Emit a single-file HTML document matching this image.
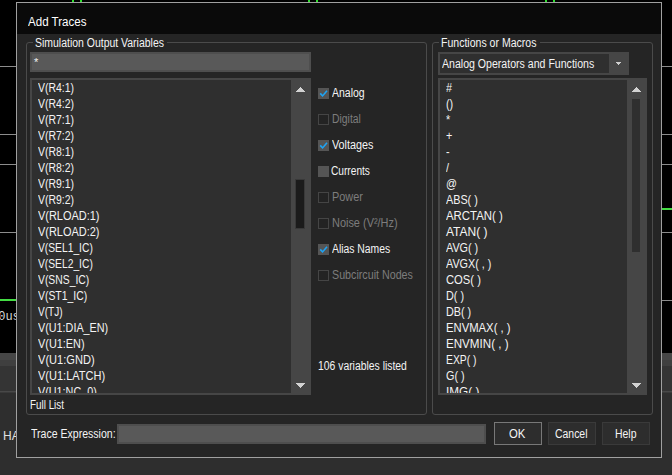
<!DOCTYPE html>
<html>
<head>
<meta charset="utf-8">
<title>Add Traces</title>
<style>
html,body{margin:0;padding:0;}
body{width:672px;height:475px;overflow:hidden;background:#000;position:relative;font-family:"Liberation Sans",sans-serif;font-size:12px;color:#f4f4f4;}
.abs{position:absolute;}
.hl{position:absolute;height:1px;background:#8c8c8c;}
.gl{position:absolute;height:2px;background:#44dd44;}
.vt{position:absolute;width:2px;height:2px;top:0;background:#2fe02f;}
#dlg{position:absolute;left:16px;top:2px;width:644px;height:454px;border:1px solid #a0a0a0;background:#252525;}
#title{position:absolute;left:0;top:0;width:644px;height:31px;background:#0a0a0a;}
.grp{position:absolute;border:1px solid #4b4b4b;border-radius:3px;}
.lbl{position:absolute;white-space:nowrap;line-height:14px;font-size:12px;transform-origin:0 50%;}
.ttl{line-height:16px;color:#fff;}
.gap{position:absolute;height:3px;background:#252525;}
.inp{position:absolute;background:#595959;border:2px solid #4e4e4e;box-sizing:border-box;}
.list{position:absolute;background:#2f2f2f;border:2px solid #464646;box-sizing:border-box;overflow:hidden;}
.list .it{position:absolute;left:6px;white-space:nowrap;line-height:16px;height:16px;font-size:12px;transform-origin:0 50%;transform:scaleX(0.90);}
.sb{position:absolute;right:0;top:0;bottom:0;width:18px;background:#464646;}
.thumb{position:absolute;left:5px;width:8px;}
.up{position:absolute;left:5px;width:0;height:0;border-left:4.5px solid transparent;border-right:4.5px solid transparent;border-bottom:5px solid #d4d4d4;}
.dn{position:absolute;left:5px;width:0;height:0;border-left:4.5px solid transparent;border-right:4.5px solid transparent;border-top:5px solid #d4d4d4;}
.cb{position:absolute;width:11px;height:11px;box-sizing:border-box;}
.cb.on{background:#555;}
.cb.off{border:1px solid #454545;background:#232323;}
.cb svg{position:absolute;left:0;top:0;}
.dis{color:#7d7d7d;}
.btn{position:absolute;box-sizing:border-box;width:48px;height:23px;background:#2d2d2d;border:1px solid #3a3a3a;}
</style>
</head>
<body>
<!-- background waveform window -->
<div class="hl" style="left:0;width:672px;top:66px;"></div>
<div class="hl" style="left:0;width:672px;top:134px;"></div>
<div class="hl" style="left:0;width:672px;top:164px;"></div>
<div class="hl" style="left:0;width:672px;top:232px;"></div>
<div class="hl" style="left:660px;width:12px;top:300px;"></div>
<div class="gl" style="left:0;width:17px;top:299px;"></div>
<div class="gl" style="left:660px;width:12px;top:208px;"></div>
<div class="vt" style="left:72px;"></div>
<div class="vt" style="left:80px;"></div>
<div class="vt" style="left:308px;"></div>
<div class="vt" style="left:316px;"></div>
<div class="vt" style="left:545px;"></div>
<div class="vt" style="left:553px;"></div>
<div class="abs" style="left:-1.8px;top:310px;font-family:'Liberation Mono',monospace;font-size:12px;color:#d6d6d6;line-height:14px;">0us</div>
<div class="abs" style="left:0;top:353px;width:672px;height:7px;background:#464646;"></div>
<div class="abs" style="left:0;top:360px;width:672px;height:6px;background:#3f3f3f;"></div>
<div class="abs" style="left:0;top:366px;width:672px;height:109px;background:#343434;"></div>
<div class="abs" style="left:0;top:391px;width:672px;height:1px;background:#484848;"></div>
<div class="abs" style="left:0;top:392px;width:672px;height:83px;background:#2e2e2e;"></div>
<div class="abs" style="left:0;top:392px;width:672px;height:1px;background:#3a3a3a;"></div>
<div class="abs" style="left:3px;top:429px;font-size:12px;line-height:14px;color:#e0e0e0;">HA</div>

<div id="dlg">
  <div id="title"></div>
  <div class="lbl ttl" style="left:11.0px;top:10.5px;font-size:12.5px;transform:scaleX(0.924);">Add Traces</div>

  <!-- left group -->
  <div class="grp" style="left:9px;top:39px;width:399px;height:371px;"></div>
  <div class="gap" style="left:16px;top:38px;width:134px;"></div>
  <div class="lbl" style="left:17.9px;top:33px;transform:scaleX(0.872);">Simulation Output Variables</div>
  <div class="inp" style="left:13px;top:49px;width:281px;height:20px;"></div>
  <div class="lbl" style="left:17px;top:51.5px;font-size:11px;">*</div>

  <div class="list" style="left:13px;top:75px;width:281px;height:317px;">
    <div class="it" style="top:0px;transform:scaleX(0.870);">V(R4:1)</div>
    <div class="it" style="top:16px;transform:scaleX(0.870);">V(R4:2)</div>
    <div class="it" style="top:32px;transform:scaleX(0.870);">V(R7:1)</div>
    <div class="it" style="top:48px;transform:scaleX(0.870);">V(R7:2)</div>
    <div class="it" style="top:64px;transform:scaleX(0.870);">V(R8:1)</div>
    <div class="it" style="top:80px;transform:scaleX(0.870);">V(R8:2)</div>
    <div class="it" style="top:96px;transform:scaleX(0.870);">V(R9:1)</div>
    <div class="it" style="top:112px;transform:scaleX(0.870);">V(R9:2)</div>
    <div class="it" style="top:128px;transform:scaleX(0.913);">V(RLOAD:1)</div>
    <div class="it" style="top:144px;transform:scaleX(0.913);">V(RLOAD:2)</div>
    <div class="it" style="top:160px;transform:scaleX(0.856);">V(SEL1_IC)</div>
    <div class="it" style="top:176px;transform:scaleX(0.856);">V(SEL2_IC)</div>
    <div class="it" style="top:192px;transform:scaleX(0.864);">V(SNS_IC)</div>
    <div class="it" style="top:208px;transform:scaleX(0.868);">V(ST1_IC)</div>
    <div class="it" style="top:224px;transform:scaleX(0.838);">V(TJ)</div>
    <div class="it" style="top:240px;">V(U1:DIA_EN)</div>
    <div class="it" style="top:256px;transform:scaleX(0.908);">V(U1:EN)</div>
    <div class="it" style="top:272px;transform:scaleX(0.923);">V(U1:GND)</div>
    <div class="it" style="top:288px;transform:scaleX(0.918);">V(U1:LATCH)</div>
    <div class="it" style="top:304px;">V(U1:NC_0)</div>
    <div class="sb">
      <svg class="abs" style="left:5px;top:7px;" width="9" height="5" shape-rendering="crispEdges" fill="#d2d2d2"><rect x="4" y="0" width="1" height="1"/><rect x="3" y="1" width="3" height="1"/><rect x="2" y="2" width="5" height="1"/><rect x="1" y="3" width="7" height="1"/><rect x="0" y="4" width="9" height="1"/></svg>
      <div class="thumb" style="top:100px;height:48px;background:#1b1b1b;box-shadow:0 0 0 1px rgba(30,30,30,0.3);"></div>
      <svg class="abs" style="left:5px;bottom:5px;" width="9" height="5" shape-rendering="crispEdges" fill="#d2d2d2"><rect x="0" y="0" width="9" height="1"/><rect x="1" y="1" width="7" height="1"/><rect x="2" y="2" width="5" height="1"/><rect x="3" y="3" width="3" height="1"/><rect x="4" y="4" width="1" height="1"/></svg>
    </div>
  </div>
  <div class="lbl" style="left:12.8px;top:395px;transform:scaleX(0.822);">Full List</div>

  <!-- checkboxes -->
  <div class="cb on" style="left:301px;top:85px;"><svg width="11" height="11" viewBox="0 0 11 11"><path d="M2.2 5.4 L4.6 7.9 L9 2.8" fill="none" stroke="#1ea4f5" stroke-width="1.6"/></svg></div>
  <div class="lbl" style="left:315.0px;top:83px;transform:scaleX(0.874);">Analog</div>
  <div class="cb off" style="left:301px;top:111px;"></div>
  <div class="lbl dis" style="left:315.0px;top:109px;transform:scaleX(0.866);">Digital</div>
  <div class="cb on" style="left:301px;top:137px;"><svg width="11" height="11" viewBox="0 0 11 11"><path d="M2.2 5.4 L4.6 7.9 L9 2.8" fill="none" stroke="#1ea4f5" stroke-width="1.6"/></svg></div>
  <div class="lbl" style="left:314.5px;top:135px;transform:scaleX(0.899);">Voltages</div>
  <div class="cb on" style="left:301px;top:163px;"></div>
  <div class="lbl" style="left:314.2px;top:161px;transform:scaleX(0.846);">Currents</div>
  <div class="cb off" style="left:301px;top:189px;"></div>
  <div class="lbl dis" style="left:315.0px;top:187px;transform:scaleX(0.908);">Power</div>
  <div class="cb off" style="left:301px;top:215px;"></div>
  <div class="lbl dis" style="left:315.0px;top:213px;transform:scaleX(0.911);">Noise (V²/Hz)</div>
  <div class="cb on" style="left:301px;top:241px;"><svg width="11" height="11" viewBox="0 0 11 11"><path d="M2.2 5.4 L4.6 7.9 L9 2.8" fill="none" stroke="#1ea4f5" stroke-width="1.6"/></svg></div>
  <div class="lbl" style="left:314.5px;top:239px;transform:scaleX(0.864);">Alias Names</div>
  <div class="cb off" style="left:301px;top:267px;"></div>
  <div class="lbl dis" style="left:315.0px;top:265px;transform:scaleX(0.892);">Subcircuit Nodes</div>
  <div class="lbl" style="left:300.5px;top:356px;transform:scaleX(0.865);">106 variables listed</div>

  <!-- right group -->
  <div class="grp" style="left:415px;top:39px;width:219px;height:371px;"></div>
  <div class="gap" style="left:422px;top:38px;width:101px;"></div>
  <div class="lbl" style="left:424.1px;top:33px;transform:scaleX(0.878);">Functions or Macros</div>
  <div class="abs" style="left:421px;top:49px;width:191px;height:23px;background:#464646;"></div>
  <div class="abs" style="left:423px;top:51px;width:169px;height:19px;background:#2f2f2f;"></div>
  <div class="lbl" style="left:424.8px;top:54px;transform:scaleX(0.881);">Analog Operators and Functions</div>
  <svg class="abs" style="left:599px;top:59px;" width="5" height="3" shape-rendering="crispEdges"><rect x="0" y="0" width="5" height="1" fill="#cfcfcf"/><rect x="1" y="1" width="3" height="1" fill="#cfcfcf"/><rect x="2" y="2" width="1" height="1" fill="#cfcfcf"/></svg>

  <div class="list" style="left:421px;top:75px;width:209px;height:317px;">
    <div class="it" style="top:0px;">#</div>
    <div class="it" style="top:16px;">()</div>
    <div class="it" style="top:32px;">*</div>
    <div class="it" style="top:48px;">+</div>
    <div class="it" style="top:64px;">-</div>
    <div class="it" style="top:80px;">/</div>
    <div class="it" style="top:96px;">@</div>
    <div class="it" style="top:112px;">ABS( )</div>
    <div class="it" style="top:128px;transform:scaleX(0.950);">ARCTAN( )</div>
    <div class="it" style="top:144px;transform:scaleX(1.000);">ATAN( )</div>
    <div class="it" style="top:160px;">AVG( )</div>
    <div class="it" style="top:176px;">AVGX( , )</div>
    <div class="it" style="top:192px;transform:scaleX(0.935);">COS( )</div>
    <div class="it" style="top:208px;">D( )</div>
    <div class="it" style="top:224px;">DB( )</div>
    <div class="it" style="top:240px;transform:scaleX(0.940);">ENVMAX( , )</div>
    <div class="it" style="top:256px;transform:scaleX(0.967);">ENVMIN( , )</div>
    <div class="it" style="top:272px;transform:scaleX(0.864);">EXP( )</div>
    <div class="it" style="top:288px;">G( )</div>
    <div class="it" style="top:304px;transform:scaleX(0.980);">IMG( )</div>
    <div class="sb">
      <svg class="abs" style="left:5px;top:7px;" width="9" height="5" shape-rendering="crispEdges" fill="#d2d2d2"><rect x="4" y="0" width="1" height="1"/><rect x="3" y="1" width="3" height="1"/><rect x="2" y="2" width="5" height="1"/><rect x="1" y="3" width="7" height="1"/><rect x="0" y="4" width="9" height="1"/></svg>
      <div class="thumb" style="top:19px;height:153px;background:#2f2f2f;"></div>
      <svg class="abs" style="left:5px;bottom:5px;" width="9" height="5" shape-rendering="crispEdges" fill="#d2d2d2"><rect x="0" y="0" width="9" height="1"/><rect x="1" y="1" width="7" height="1"/><rect x="2" y="2" width="5" height="1"/><rect x="3" y="3" width="3" height="1"/><rect x="4" y="4" width="1" height="1"/></svg>
    </div>
  </div>

  <!-- bottom row -->
  <div class="lbl" style="left:13.7px;top:424px;transform:scaleX(0.879);">Trace Expression:</div>
  <div class="inp" style="left:100px;top:421px;width:369px;height:20px;"></div>
  <div class="btn" style="left:477px;top:419px;border-color:#787878;"></div>
  <div class="btn" style="left:531px;top:419px;"></div>
  <div class="btn" style="left:585px;top:419px;"></div>
  <div class="lbl" style="left:492.0px;top:424px;transform:scaleX(0.946);">OK</div>
  <div class="lbl" style="left:537.8px;top:424px;transform:scaleX(0.870);">Cancel</div>
  <div class="lbl" style="left:598.0px;top:424px;transform:scaleX(0.868);">Help</div>
</div>
</body>
</html>
